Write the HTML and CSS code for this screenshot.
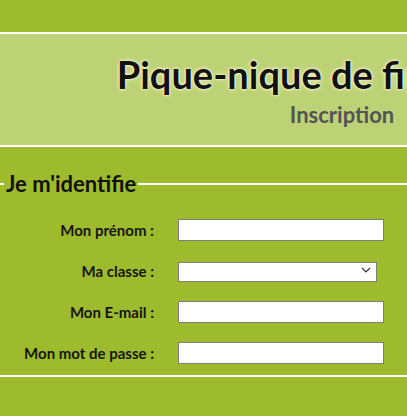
FILE: index.html
```
<!DOCTYPE html>
<html lang="fr">
	<head>
		<meta charset="UTF-8" />
		<meta name="viewport" content="width=device-width, initial-scale=1.0" />
		<title>Pique-nique de fin d'année - Inscription</title>
		<link rel="stylesheet" href="styles.css">
	</head>
	<body>
		<div class="page">
			<header class="banner">
				<h1>Pique-nique de fin d'année</h1>
				<h2>Inscription</h2>
			</header>
			<form id="inscription">
				<fieldset>
					<legend>Je m'identifie</legend>
					<div class="row">
						<label for="prenom">Mon prénom :</label>
						<input type="text" id="prenom" />
					</div>
					<div class="row">
						<label for="classe">Ma classe :</label>
						<span class="select-wrap">
							<select id="classe">
								<option value=""></option>
							</select>
							<svg class="chevron" width="10" height="6" viewBox="0 0 10 6">
								<path d="M1 1 L5 5 L9 1" fill="none" stroke="#333" stroke-width="1.2" />
							</svg>
						</span>
					</div>
					<div class="row">
						<label for="email">Mon E-mail :</label>
						<input type="text" id="email" />
					</div>
					<div class="row">
						<label for="mdp">Mon mot de passe :</label>
						<input type="password" id="mdp" />
					</div>
				</fieldset>
			</form>
		</div>
	</body>
</html>
```

FILE: styles.css
```
html {
	overflow: hidden;
}
body {
	margin: 0;
	background-color: #9dbb2c; /* vert */
	font-family: Lato, "Open Sans", sans-serif;
	color: #151515;
}
.page {
	width: 684px;
	padding-top: 32px;
}
.banner {
	background-color: #bdd275; /* vert clair */
	border-top: 2px solid #fff;
	border-bottom: 2px solid #fff;
	height: 111px;
	text-align: center;
}
h1 {
	margin: 0;
	padding-top: 19px;
	font-size: 38px;
	line-height: 42px;
	color: #111;
	text-shadow: 0 0 4px #fff6d0, 0 0 2px #fffbe8, 0 0 1px #fff;
}
h2 {
	margin: 0;
	padding-top: 6px;
	font-size: 22px;
	line-height: 28px;
	color: #545454;
}
form {
	margin-top: 23px;
}
fieldset {
	margin: 0;
	padding: 22px 0 0 4px;
	border: none;
	border-top: 2px solid #fff;
	border-bottom: 2px solid #fff;
	height: 181px;
}
legend {
	padding: 0 2px;
	font-size: 22px;
	font-weight: bold;
	color: #111;
}
.row {
	display: flex;
	align-items: center;
	height: 22px;
	margin-bottom: 19px;
}
label {
	width: 150px;
	margin-right: 24px;
	text-align: right;
	font-size: 15px;
	font-weight: bold;
}
input,
select {
	box-sizing: border-box;
	width: 206px;
	height: 22px;
	margin: 0;
	border: 1px solid #7d7d7d;
	border-radius: 0;
	background-color: #fff;
}
.select-wrap {
	position: relative;
	display: block;
}
select {
	width: 199px;
	height: 20px;
	appearance: none;
}
.chevron {
	position: absolute;
	right: 6px;
	top: 7px;
}
```
